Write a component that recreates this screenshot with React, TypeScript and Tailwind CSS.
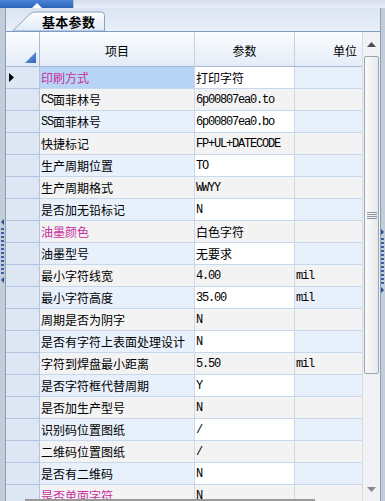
import React from "react";

type Row = { label: string; value: string; unit?: string; pink?: boolean };

const rows: Row[] = [
  { label: "印刷方式", value: "打印字符", pink: true },
  { label: "CS面菲林号", value: "6p00807ea0.to" },
  { label: "SS面菲林号", value: "6p00807ea0.bo" },
  { label: "快捷标记", value: "FP+UL+DATECODE" },
  { label: "生产周期位置", value: "TO" },
  { label: "生产周期格式", value: "WWYY" },
  { label: "是否加无铅标记", value: "N" },
  { label: "油墨颜色", value: "白色字符", pink: true },
  { label: "油墨型号", value: "无要求" },
  { label: "最小字符线宽", value: "4.00", unit: "mil" },
  { label: "最小字符高度", value: "35.00", unit: "mil" },
  { label: "周期是否为阴字", value: "N" },
  { label: "是否有字符上表面处理设计", value: "N" },
  { label: "字符到焊盘最小距离", value: "5.50", unit: "mil" },
  { label: "是否字符框代替周期", value: "Y" },
  { label: "是否加生产型号", value: "N" },
  { label: "识别码位置图纸", value: "/" },
  { label: "二维码位置图纸", value: "/" },
  { label: "是否有二维码", value: "N" },
  { label: "是否单面字符", value: "N", pink: true },
];

function Txt({ t }: { t: string }) {
  const parts = t.split(/([\x20-\x7e]+)/).filter(Boolean);
  return (
    <>
      {parts.map((p, i) =>
        /^[\x20-\x7e]+$/.test(p) ? (
          <span key={i} className="font-['Liberation_Mono',monospace] text-[12px] tracking-[-1.2px]">
            {p}
          </span>
        ) : (
          <span key={i}>{p}</span>
        )
      )}
    </>
  );
}

function Splitter() {
  return (
    <svg width="5" height="64" viewBox="0 0 5 64" className="block">
      <polygon points="4,0 4,6 1,3" fill="#2d4f86" />
      {Array.from({ length: 12 }).map((_, i) => (
        <rect key={i} x="1" y={9 + i * 4} width="3" height="2" fill="#3a62a4" />
      ))}
      <polygon points="4,58 4,64 1,61" fill="#2d4f86" />
    </svg>
  );
}

export default function App() {
  return (
    <div className="w-[385px] h-[501px] overflow-hidden relative flex flex-col bg-[#e6edf7] font-['Noto_Sans_CJK_SC',sans-serif] text-[12px] text-black">
      {/* top strip */}
      <div className="h-[8px] flex shrink-0">
        <div className="w-[73px] h-full bg-gradient-to-b from-[#4a86d8] to-[#2a63b8] flex justify-center items-end">
          <div className="w-0 h-0 border-l-[5px] border-r-[5px] border-b-[5px] border-l-transparent border-r-transparent border-b-white" />
        </div>
        <div className="flex-1 h-full bg-gradient-to-b from-[#d4deec] to-[#e8eef7] border-l border-[#b7c5da]" />
      </div>

      <div className="flex-1 flex min-h-0">
        {/* left bar */}
        <div className="w-[6px] bg-[#c3ccd9] border-r border-[#8c9db8] flex flex-col pt-[211px]">
          <Splitter />
        </div>

        <div className="flex-1 flex flex-col min-w-0">
          {/* tab row */}
          <div className="h-[23px] shrink-0 bg-gradient-to-b from-[#dae4f2] to-[#e9eff8] relative">
            <svg width="110" height="23" viewBox="0 0 110 23" className="absolute left-0 top-0">
              <defs>
                <linearGradient id="tabg" x1="0" y1="0" x2="0" y2="1">
                  <stop offset="0" stopColor="#ffffff" />
                  <stop offset="1" stopColor="#dfe9f7" />
                </linearGradient>
              </defs>
              <path d="M6.5,23 L24,6 Q26,4 29,4 L95,4 Q98.5,4 98.5,7.5 L98.5,23 Z" fill="url(#tabg)" stroke="#8aa2c6" strokeWidth="1" />
            </svg>
            <div className="absolute left-[36px] top-[4px] h-[19px] flex items-center font-bold text-[13px] tracking-[0.3px]">
              基本参数
            </div>
          </div>

          {/* grid */}
          <div className="flex-1 min-h-0 flex border-t border-[#7f9bc4] bg-white">
            <div className="flex-1 min-w-0 flex flex-col overflow-hidden">
              {/* header */}
              <div className="h-[35px] shrink-0 flex border-b border-[#a6b9d6] bg-gradient-to-b from-[#fbfcfe] to-[#e4ecf7]">
                <div className="w-[34px] shrink-0 border-r border-[#a6b9d6] relative">
                  <svg width="12" height="12" viewBox="0 0 12 12" className="absolute right-[2px] bottom-[2px]">
                    <defs>
                      <linearGradient id="trg" x1="0" y1="0" x2="1" y2="1">
                        <stop offset="0" stopColor="#7aa6e6" />
                        <stop offset="1" stopColor="#2f62b5" />
                      </linearGradient>
                    </defs>
                    <polygon points="11,0 11,11 0,11" fill="#4a7fcf" />
                    <polygon points="11,1 11,11 1,11" fill="url(#trg)" />
                  </svg>
                </div>
                <div className="w-[155px] shrink-0 border-r border-[#c4d2e8] flex items-center justify-center pt-[3px]">项目</div>
                <div className="w-[100px] shrink-0 border-r border-[#c4d2e8] flex items-center justify-center pt-[3px]">参数</div>
                <div className="flex-1 flex items-center justify-end pr-[5px] pt-[3px]">单位</div>
              </div>

              {/* rows */}
              {rows.map((r, i) => {
                const odd = i % 2 === 0;
                const sel = i === 0;
                const labelBg = sel ? "bg-[#b8d4f4]" : odd ? "bg-[#e8f0fc]" : "bg-[#f3f3f3]";
                const valBg = odd ? "bg-white" : "bg-[#f3f3f3]";
                const unitBg = odd ? "bg-[#e8f0fc]" : "bg-[#f3f3f3]";
                return (
                  <div key={i} className="h-[22px] shrink-0 flex">
                    <div className="w-[34px] shrink-0 bg-[#dde6f3] border-r border-b border-[#b3c4de] flex items-center pl-[3px]">
                      {sel && (
                        <svg width="6" height="9" viewBox="0 0 6 9">
                          <polygon points="0,0 5,4.5 0,9" fill="#000" />
                        </svg>
                      )}
                    </div>
                    <div className={`w-[155px] shrink-0 ${labelBg} border-r border-b border-[#c9d7ec] flex items-center pl-[1px] whitespace-nowrap overflow-hidden ${r.pink ? "text-[#c8309f]" : ""}`}>
                      <Txt t={r.label} />
                    </div>
                    <div className={`w-[100px] shrink-0 ${valBg} border-r border-b border-[#c9d7ec] flex items-center pl-[1px] whitespace-nowrap overflow-hidden`}>
                      <Txt t={r.value} />
                    </div>
                    <div className={`flex-1 ${unitBg} border-b border-[#c9d7ec] flex items-center pl-[1px] whitespace-nowrap overflow-hidden`}>
                      {r.unit ? <Txt t={r.unit} /> : null}
                    </div>
                  </div>
                );
              })}
            </div>

            {/* vertical scrollbar */}
            <div className="w-[18px] shrink-0 bg-[#f1f2f4] border-l border-[#d6dbe3] flex flex-col items-center">
              <div className="h-[21px] w-full flex items-center justify-center pt-[3px]">
                <svg width="9" height="5" viewBox="0 0 9 5">
                  <polygon points="4.5,0 9,5 0,5" fill="#4d4d4d" />
                </svg>
              </div>
              <div className="mt-[3px] h-[318px] w-[15px] rounded-[2px] border border-[#98a3b3] bg-gradient-to-r from-[#fbfbfb] to-[#e6e8eb] flex flex-col items-center justify-center gap-[1px]">
                <div className="w-[10px] h-[1px] bg-[#8d96a3]" />
                <div className="w-[10px] h-[1px] bg-[#8d96a3]" />
                <div className="w-[10px] h-[1px] bg-[#8d96a3]" />
                <div className="w-[10px] h-[1px] bg-[#8d96a3]" />
              </div>
              <div className="flex-1" />
              <div className="h-[16px] w-full flex items-start justify-center pt-[2px]">
                <svg width="9" height="5" viewBox="0 0 9 5">
                  <polygon points="0,0 9,0 4.5,5" fill="#8a8a8a" />
                </svg>
              </div>
            </div>
          </div>
        </div>

        {/* right bar */}
        <div className="w-[5px] bg-[#c3ccd9] border-l border-[#8c9db8] flex flex-col pt-[221px] items-end">
          <svg width="4" height="64" viewBox="0 0 4 64" className="block">
            <polygon points="0,0 0,6 3,3" fill="#2d4f86" />
            {Array.from({ length: 12 }).map((_, i) => (
              <rect key={i} x="0" y={9 + i * 4} width="3" height="2" fill="#3a62a4" />
            ))}
            <polygon points="0,58 0,64 3,61" fill="#2d4f86" />
          </svg>
        </div>
      </div>

      {/* horizontal scrollbar thumb edge peeking at bottom */}
      <div className="absolute left-[25px] bottom-0 w-[290px] h-[2px] bg-[#9a9a9a]" />
    </div>
  );
}
